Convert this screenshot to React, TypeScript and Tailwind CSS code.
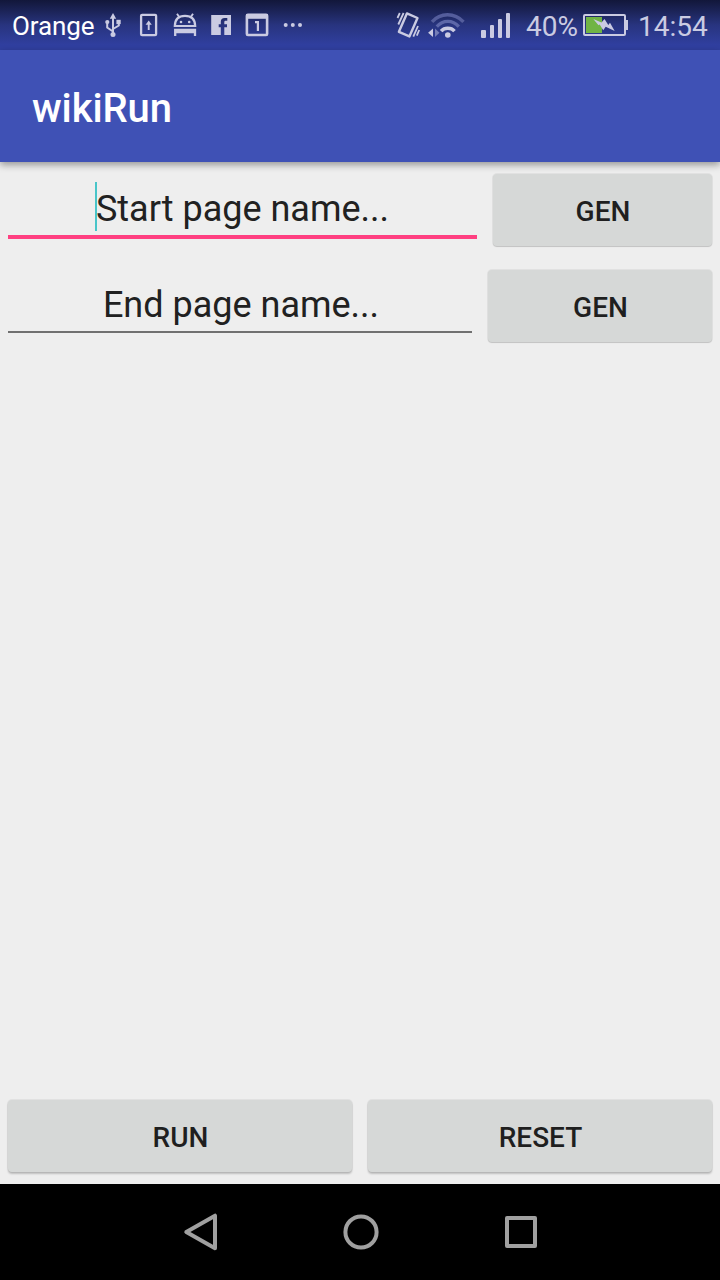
import type { ReactNode } from "react";

function Glyph({ box, className, children }: { box: string; className: string; children: ReactNode }) {
  return (
    <svg viewBox={box} className={`h-[50px] shrink-0 ${className}`} fill="none" stroke="none">
      {children}
    </svg>
  );
}

const ink = "#cacbe2";

function StatusBar() {
  return (
    <header className="flex h-[50px] shrink-0 items-center bg-gradient-to-b from-[#12173a] via-[#28347f] via-50% to-[#303f9f] to-90% pl-3 text-[#cacbe2]">
      <span className="w-[92px] whitespace-nowrap pt-px text-[26px] leading-[30px] tracking-[-0.1px] text-white">Orange</span>
      <Glyph box="104 0 20 50" className="w-5">
        <path d="M113 17V34M113 31.5L107.2 27.5V22M113 29L118.8 25.5V21" stroke={ink} strokeWidth="2" />
        <path d="M113 13L116.2 18.7H109.8Z" fill={ink} />
        <circle cx="107.3" cy="22" r="2.1" fill={ink} />
        <rect x="116.4" y="19.8" width="4.3" height="4.3" fill={ink} />
        <circle cx="113" cy="34.4" r="2.5" fill={ink} />
      </Glyph>
      <Glyph box="138 0 22 50" className="ml-3.5 w-[22px]">
        <rect x="141.1" y="14.8" width="15" height="20.4" rx="1" stroke={ink} strokeWidth="2.3" />
        <path d="M148.7 30V23" stroke={ink} strokeWidth="1.9" />
        <path d="M148.7 20.5L151.8 24.7H145.6Z" fill={ink} />
      </Glyph>
      <Glyph box="172 0 26 50" className="ml-3 w-[26px]">
        <path d="M174.8 26C175 19 179 15.9 185 15.9S195 19 195.2 26Z" stroke={ink} strokeWidth="2.2" />
        <path d="M179.7 17.7L177 13.8M190.3 17.7L193 13.8" stroke={ink} strokeWidth="1.9" />
        <path d="M175.2 36V30H195V36M175 32.2H195" stroke={ink} strokeWidth="2.3" />
        <circle cx="181" cy="22" r="1.3" fill={ink} />
        <circle cx="189.2" cy="22" r="1.3" fill={ink} />
      </Glyph>
      <Glyph box="210 0 22 50" className="ml-3 w-[22px]">
        <path fill={ink} d="M211.2 15H231V35H224.3V27.3H227V24.2H224.3V22.2C224.3 21.1 224.8 20.8 225.8 20.8H227.3V17.9H224.8C222 17.9 220.8 19.4 220.8 21.8V24.2H218.7V27.3H220.8V35H211.2Z" />
      </Glyph>
      <Glyph box="244 0 26 50" className="ml-3 w-[26px]">
        <rect x="246.9" y="14.8" width="20.2" height="20.2" rx="1" stroke={ink} strokeWidth="2.6" />
        <path d="M246 14H268V18.8H246Z" fill={ink} />
        <path d="M255 22.1H257.9V31" stroke={ink} strokeWidth="2.2" />
      </Glyph>
      <Glyph box="282 0 24 50" className="ml-3 w-6">
        <circle cx="285.7" cy="25" r="2" fill={ink} />
        <circle cx="292.8" cy="25" r="2" fill={ink} />
        <circle cx="300" cy="25" r="2" fill={ink} />
      </Glyph>
      <Glyph box="394 0 28 50" className="ml-[88px] w-7">
        <path d="M406.9 13.4L417.5 18L409.4 36.4L398.9 31.8Z" stroke={ink} strokeWidth="2.4" strokeLinejoin="round" />
        <path d="M399.8 13L397.5 18M403.6 13L398.3 24.5M419.2 30L416.8 35.6M418 26L413.3 36.6" stroke={ink} strokeWidth="1.8" />
      </Glyph>
      <Glyph box="426 0 40 50" className="ml-1 w-10">
        <path d="M432 21.8C440.5 12.3 454.5 12.3 463.5 21.8" stroke="#545d9c" strokeWidth="3.4" />
        <path d="M436.8 26.6C443 19.6 452.6 19.6 458.8 26.6" stroke="#5d67a8" strokeWidth="3.2" />
        <path d="M441.1 31.2C444.5 27.4 451.1 27.4 454.5 31.2" stroke={ink} strokeWidth="3.5" />
        <circle cx="447.8" cy="35" r="2.8" fill={ink} />
        <path d="M433 28.5V37L428.1 32.8Z" fill={ink} />
        <path d="M435 28.5V37L439.5 32.8Z" fill="#747db6" />
      </Glyph>
      <Glyph box="478 0 34 50" className="ml-3 w-[34px]">
        <g fill={ink}>
          <rect x="481" y="30" width="5" height="8" rx="1" />
          <rect x="490" y="25" width="4" height="13" rx="1" />
          <rect x="498" y="19" width="4" height="19" rx="1" />
          <rect x="506" y="13" width="4" height="25" rx="1" />
        </g>
      </Glyph>
      <span className="ml-3.5 w-[54px] whitespace-nowrap pt-[3px] text-[28px] leading-8">40%</span>
      <Glyph box="580 0 50 50" className="w-[50px]">
        <rect x="584" y="15" width="41" height="20" rx="1" stroke={ink} strokeWidth="2" />
        <path d="M626 20H628V30H626Z" fill={ink} />
        <path d="M586 17H602V33H586Z" fill="#70b444" />
        <path d="M593.3 19L601.5 22.5L604.5 19L608.3 25L610 22.7L614.7 31L605.7 26.7L603.2 30.2L599.7 24.5L598.5 25.3Z" fill={ink} />
      </Glyph>
      <span className="ml-2 whitespace-nowrap pt-[3px] text-[28px] leading-8">14:54</span>
    </header>
  );
}

function RaisedButton({ label, className }: { label: string; className: string }) {
  return (
    <button
      className={`flex h-[72px] items-center justify-center rounded-[4px] bg-[#d6d8d7] pt-1 pl-px text-[28px] leading-8 font-medium text-[#1f1f1f] ${className}`}
    >
      {label}
    </button>
  );
}

const flat = "shadow-[0_0_0_1px_rgba(0,0,0,0.05),0_1px_1px_rgba(0,0,0,0.14)]";
const raised = "shadow-[0_0_0_1px_rgba(0,0,0,0.05),0_2px_2px_rgba(0,0,0,0.2)]";

export default function App() {
  return (
    <div className="flex h-[1280px] w-[720px] flex-col overflow-hidden bg-[#eeeeee] font-['Roboto',sans-serif]">
      <StatusBar />
      <div className="flex h-28 shrink-0 items-center bg-[#3f51b5] pt-1.5 pl-8 text-[40px] leading-[48px] font-medium tracking-[-0.1px] text-white shadow-[0_3px_7px_rgba(0,0,0,0.36)]">
        wikiRun
      </div>
      <main className="flex flex-1 flex-col">
        <div className="flex h-24 items-center px-2">
          <div className="mt-[-19px] flex h-[77px] w-[469px] justify-center border-b-4 border-[#ff4081] pt-[25px] text-[36px] leading-[44px] text-[#212121]">
            <span className="-mt-[5px] -ml-px h-[49px] w-0.5 bg-[#48c5c9]" />
            <span className="-ml-px whitespace-nowrap">Start page name...</span>
          </div>
          <RaisedButton label="GEN" className={`ml-4 w-[219px] ${flat}`} />
        </div>
        <div className="flex h-24 items-center px-2">
          <div className="mt-[-21px] flex h-[75px] w-[464px] justify-center border-b-2 border-[#707070] pt-[25px] pl-0.5 text-[36px] leading-[44px] text-[#212121]">
            <span>End page name...</span>
          </div>
          <RaisedButton label="GEN" className={`ml-4 w-[224px] ${flat}`} />
        </div>
        <div className="mt-auto flex h-24 items-center gap-4 px-2">
          <RaisedButton label="RUN" className={`flex-1 ${raised}`} />
          <RaisedButton label="RESET" className={`flex-1 ${raised}`} />
        </div>
      </main>
      <nav className="flex h-24 shrink-0 items-center bg-black">
        <svg viewBox="0 0 720 96" className="h-24 w-full" fill="none" stroke="#a0a0a0" strokeWidth="4" strokeLinejoin="round">
          <path d="M215 31.7V64.3L186.3 48Z" />
          <circle cx="361" cy="48" r="15.6" />
          <rect x="507" y="34" width="28" height="28" />
        </svg>
      </nav>
    </div>
  );
}
